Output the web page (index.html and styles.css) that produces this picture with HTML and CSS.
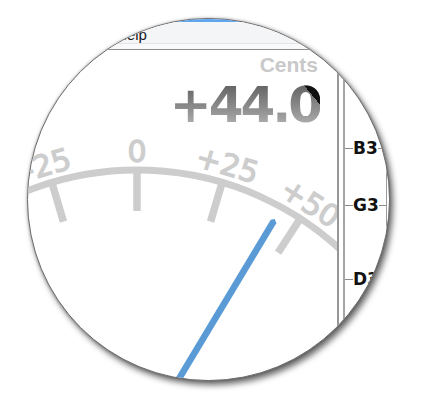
FILE: index.html
```html
<!DOCTYPE html>
<html>
<head>
<meta charset="utf-8">
<link rel="stylesheet" href="styles.css">
</head>
<body>
<div class="lens">
  <div class="titlebar"></div>
  <div class="menubar"><span class="menu-item">Help</span></div>
  <div class="main">
    <div class="meter">
      <div class="meter-head">
        <div class="cents-label">Cents</div>
        <div class="cents-value">+44.0</div>
      </div>
      <svg class="gauge" width="309" height="255" viewBox="28 126 309 255" xmlns="http://www.w3.org/2000/svg">
        <path d="M -55.8 240.2 A 300 300 0 0 1 349.1 257.9" fill="none" stroke="#cdcdcd" stroke-width="7"/>
        <g stroke="#cdcdcd" stroke-width="7.5">
          <line x1="137" y1="172" x2="137" y2="211" transform="rotate(-16.5 137 470)"/>
          <line x1="137" y1="172" x2="137" y2="211"/>
          <line x1="137" y1="172" x2="137" y2="211" transform="rotate(16.5 137 470)"/>
          <line x1="137" y1="172" x2="137" y2="211" transform="rotate(33 137 470)"/>
        </g>
        <g class="gauge-labels" font-family="DejaVu Sans, sans-serif" font-size="30" fill="#cdcdcd" stroke="#cdcdcd" stroke-width="1.3" text-anchor="middle">
          <text x="137" y="162" transform="rotate(-16.5 137 470)">-25</text>
          <text x="137" y="162">0</text>
          <text x="137" y="162" transform="rotate(16.5 137 470)">+25</text>
          <text x="137" y="162" transform="rotate(33 137 470)">+50</text>
        </g>
        <polygon points="270.7,219.8 274.8,218.9 276.3,223.2 163.0,411.7 157.4,408.3" fill="#5b9bd5"/>
      </svg>
    </div>
    <div class="scale">
      <div class="track">
        <div class="note note-b3">B3</div>
        <div class="note note-g3">G3</div>
        <div class="note note-d3">D3</div>
      </div>
    </div>
  </div>
</div>
</body>
</html>
```
FILE: styles.css
```css
html, body {
  margin: 0;
  padding: 0;
  background: #ffffff;
}

body {
  width: 421px;
  height: 411px;
  overflow: hidden;
}

.lens {
  box-sizing: border-box;
  margin: 18px 0 0 27px;
  width: 363px;
  height: 363px;
  border-radius: 50%;
  border: 1px solid #6c6c6c;
  overflow: hidden;
  background: #ffffff;
  box-shadow: 3px 4px 6px rgba(0, 0, 0, 0.6), 0 0 3px rgba(0, 0, 0, 0.25);
}

.titlebar {
  height: 3px;
  background: #5fa6ef;
}

.menubar {
  box-sizing: border-box;
  height: 28px;
  padding: 4px 0 0 88px;
  background: linear-gradient(#f4f5f7 0 21px, #e3e4e6 21px 22px, #f9f9fa 22px);
  border-bottom: 1px solid #8e8e8e;
  font-family: "Liberation Sans", Arial, sans-serif;
  font-size: 15px;
  line-height: 17px;
  color: #161616;
}

.main {
  display: flex;
  height: 331px;
}

.meter {
  width: 309px;
  flex: none;
}

.meter-head {
  height: 76px;
  padding-right: 19px;
  text-align: right;
}

.cents-label {
  padding-top: 4px;
  font-family: "Liberation Sans", Arial, sans-serif;
  font-weight: bold;
  font-size: 21px;
  line-height: 21px;
  color: #c9c9c9;
}

.cents-value {
  margin-top: 5px;
  margin-right: -2px;
  font-family: "DejaVu Sans", sans-serif;
  font-weight: bold;
  font-size: 50px;
  line-height: 50px;
  letter-spacing: -3px;
  color: transparent;
  background:
    linear-gradient(50deg, transparent 50%, #111111 50%) calc(100% + 12px) -5px / 40px 40px no-repeat,
    linear-gradient(#666666 12%, #8c8c8c 55%, #acacac 88%);
  -webkit-background-clip: text;
  background-clip: text;
}

.gauge {
  display: block;
}

.scale {
  flex: none;
  border-left: 2px solid #979797;
  padding-left: 4px;
}

.track {
  display: flex;
  flex-direction: column;
  width: 41px;
  height: 100%;
  border-left: 2px solid #a5a5a5;
  border-right: 1px solid #9a9a9a;
}

.note {
  display: flex;
  align-items: center;
  height: 20px;
  font-family: "DejaVu Sans", sans-serif;
  font-weight: bold;
  font-size: 17px;
  line-height: 20px;
  color: #111111;
}

.note::before,
.note::after {
  content: "";
  height: 1px;
  background: #8a8a8a;
}

.note::before {
  width: 8px;
  flex: none;
}

.note::after {
  flex: 1;
}

.note-b3 { margin-top: 88px; }
.note-g3 { margin-top: 37px; }
.note-d3 { margin-top: 54px; }
```
